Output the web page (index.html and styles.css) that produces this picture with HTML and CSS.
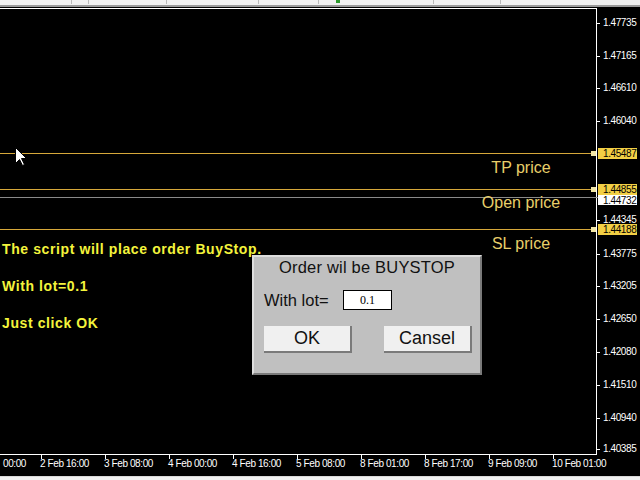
FILE: index.html
```html
<!DOCTYPE html>
<html>
<head>
<meta charset="utf-8">
<link rel="stylesheet" href="styles.css">
</head>
<body>
<div class="toolbar">
  <span class="sep" style="left:71px"></span>
  <span class="sep" style="left:88px"></span>
  <span class="sep" style="left:166px"></span>
  <span class="sep" style="left:258px"></span>
  <span class="sep" style="left:318px"></span>
  <span class="led"></span>
  <span class="sep" style="left:433px"></span>
  <span class="sep" style="left:500px"></span>
</div>
<div class="chart">
  <div class="plot">
    <div class="hline level" style="top:144px"></div>
    <div class="hline level" style="top:180px"></div>
    <div class="hline bid" style="top:188px"></div>
    <div class="hline level" style="top:220px"></div>
    <span class="marker" style="top:142px"></span>
    <span class="marker" style="top:178px"></span>
    <span class="marker" style="top:218px"></span>

    <span class="tag" style="top:149px">TP price</span>
    <span class="tag" style="top:184px">Open price</span>
    <span class="tag" style="top:225px">SL price</span>

    <div class="note">
      <p>The script will place order BuyStop.</p>
      <p>With lot=0.1</p>
      <p>Just click OK</p>
    </div>

    <svg class="cursor" width="13" height="20" viewBox="0 0 13 20">
      <path d="M0.5 0.5 L0.5 16.5 L4.5 12.5 L7.5 18.5 L9.5 17.5 L6.5 11.5 L11.5 11.5 Z" fill="#fff" stroke="#000" stroke-width="1"/>
    </svg>

    <div class="dialog">
      <div class="dlg-title">Order wil be BUYSTOP</div>
      <div class="dlg-row">
        <span class="dlg-label">With lot=</span>
        <span class="dlg-input">0.1</span>
      </div>
      <div class="dlg-buttons">
        <span class="btn">OK</span>
        <span class="btn">Cansel</span>
      </div>
    </div>
  </div>

  <div class="price-axis">
    <span class="pl" style="top:9px"><i></i>1.47735</span>
    <span class="pl" style="top:42px"><i></i>1.47165</span>
    <span class="pl" style="top:74px"><i></i>1.46610</span>
    <span class="pl" style="top:107px"><i></i>1.46040</span>
    <span class="pl" style="top:206px"><i></i>1.44345</span>
    <span class="pl" style="top:240px"><i></i>1.43775</span>
    <span class="pl" style="top:272px"><i></i>1.43205</span>
    <span class="pl" style="top:305px"><i></i>1.42650</span>
    <span class="pl" style="top:338px"><i></i>1.42080</span>
    <span class="pl" style="top:371px"><i></i>1.41510</span>
    <span class="pl" style="top:404px"><i></i>1.40940</span>
    <span class="pl" style="top:435px"><i></i>1.40385</span>
    <span class="box white" style="top:186px">1.44732</span>
    <span class="box gold" style="top:140px">1.45487</span>
    <span class="box gold" style="top:176px">1.44855</span>
    <span class="box gold" style="top:216px">1.44188</span>
  </div>

  <div class="time-axis">
    <span class="tl" style="left:3px">00:00</span>
    <span class="tl" style="left:40px"><i></i>2 Feb 16:00</span>
    <span class="tl" style="left:104px"><i></i>3 Feb 08:00</span>
    <span class="tl" style="left:168px"><i></i>4 Feb 00:00</span>
    <span class="tl" style="left:232px"><i></i>4 Feb 16:00</span>
    <span class="tl" style="left:296px"><i></i>5 Feb 08:00</span>
    <span class="tl" style="left:360px"><i></i>8 Feb 01:00</span>
    <span class="tl" style="left:424px"><i></i>8 Feb 17:00</span>
    <span class="tl" style="left:488px"><i></i>9 Feb 09:00</span>
    <span class="tl" style="left:552px"><i></i>10 Feb 01:00</span>
  </div>
</div>
<div class="status"></div>
</body>
</html>
```
FILE: styles.css
```css
html, body {
  margin: 0;
  padding: 0;
}
body {
  width: 640px;
  height: 480px;
  overflow: hidden;
  background: #000;
  font-family: "Liberation Sans", Arial, sans-serif;
}
.toolbar {
  position: relative;
  height: 5px;
  background: #f0f0f0;
  border-bottom: 2px solid #9a9a9a;
}
.toolbar .sep {
  position: absolute;
  top: 0;
  width: 1px;
  height: 4px;
  background: #b8b8b8;
}
.toolbar .led {
  position: absolute;
  left: 336px;
  top: 0;
  width: 4px;
  height: 3px;
  background: #2e9a2e;
}
.chart {
  display: grid;
  grid-template-columns: 597px 43px;
  grid-template-rows: 447px 20px;
  padding-top: 1px;
  height: 468px;
  box-sizing: border-box;
}
.plot {
  position: relative;
  border-top: 1px solid #fff;
  border-right: 1px solid #fff;
  border-bottom: 1px solid #fff;
  box-sizing: border-box;
}
.hline {
  position: absolute;
  left: 0;
  right: 0;
  height: 1px;
}
.level { background: #d6a83a; }
.bid { background: #8a8a8a; right: -5px; }
.marker {
  position: absolute;
  left: 591px;
  width: 5px;
  height: 5px;
  background: #f2e6a6;
}
.tag {
  position: absolute;
  left: 471px;
  width: 100px;
  text-align: center;
  color: #e8cf6a;
  font-size: 16px;
  line-height: 20px;
}
.note {
  position: absolute;
  left: 2px;
  top: 231px;
  display: flex;
  flex-direction: column;
  gap: 19px;
  color: #f4f43c;
  font-weight: bold;
  font-size: 14px;
  letter-spacing: 0.6px;
}
.note p {
  margin: 0;
  line-height: 18px;
}
.cursor {
  position: absolute;
  left: 15px;
  top: 138px;
}
.dialog {
  position: absolute;
  left: 252px;
  top: 246px;
  width: 230px;
  height: 120px;
  box-sizing: border-box;
  background: #c0c0c0;
  border: 2px solid;
  border-color: #dedede #7a7a7a #7a7a7a #dedede;
  display: flex;
  flex-direction: column;
}
.dlg-title {
  text-align: center;
  font-size: 16.5px;
  letter-spacing: 0.2px;
  line-height: 20px;
  color: #111;
}
.dlg-row {
  display: flex;
  align-items: center;
  margin-top: 13px;
  padding-left: 10px;
  height: 20px;
}
.dlg-label {
  width: 79px;
  font-size: 16.5px;
  color: #111;
}
.dlg-input {
  width: 49px;
  height: 20px;
  box-sizing: border-box;
  background: #fff;
  border: 1px solid #000;
  font-family: "Liberation Serif", "Times New Roman", serif;
  font-size: 12px;
  line-height: 18px;
  text-align: center;
}
.dlg-buttons {
  display: flex;
  gap: 32px;
  margin-top: 16px;
  padding-left: 10px;
}
.btn {
  width: 88px;
  height: 27px;
  box-sizing: border-box;
  background: #f0f0f0;
  border-right: 2px solid #7a7a7a;
  border-bottom: 2px solid #7a7a7a;
  text-align: center;
  font-size: 18px;
  line-height: 25px;
  color: #111;
}
.price-axis {
  position: relative;
  color: #fff;
  font-size: 10px;
  letter-spacing: -0.4px;
}
.pl {
  position: absolute;
  left: 6px;
  height: 12px;
  line-height: 12px;
  white-space: nowrap;
}
.pl i {
  position: absolute;
  left: -7px;
  top: 6px;
  width: 4px;
  height: 1px;
  background: #fff;
}
.box {
  position: absolute;
  left: 1px;
  width: 39px;
  height: 11px;
  line-height: 11px;
  padding-left: 5px;
  box-sizing: border-box;
  color: #000;
}
.gold { background: #f2cf45; }
.white { background: #fff; line-height: 13px; overflow: hidden; }
.time-axis {
  position: relative;
  color: #fff;
  font-size: 10px;
  letter-spacing: -0.4px;
}
.tl {
  position: absolute;
  top: 3px;
  line-height: 12px;
  white-space: nowrap;
}
.tl i {
  position: absolute;
  left: 1px;
  top: -3px;
  width: 1px;
  height: 4px;
  background: #fff;
}
.status {
  height: 3px;
  margin-top: 1px;
  border-top: 1px solid #d8d8d8;
  background: #f0f0f0;
}
```
